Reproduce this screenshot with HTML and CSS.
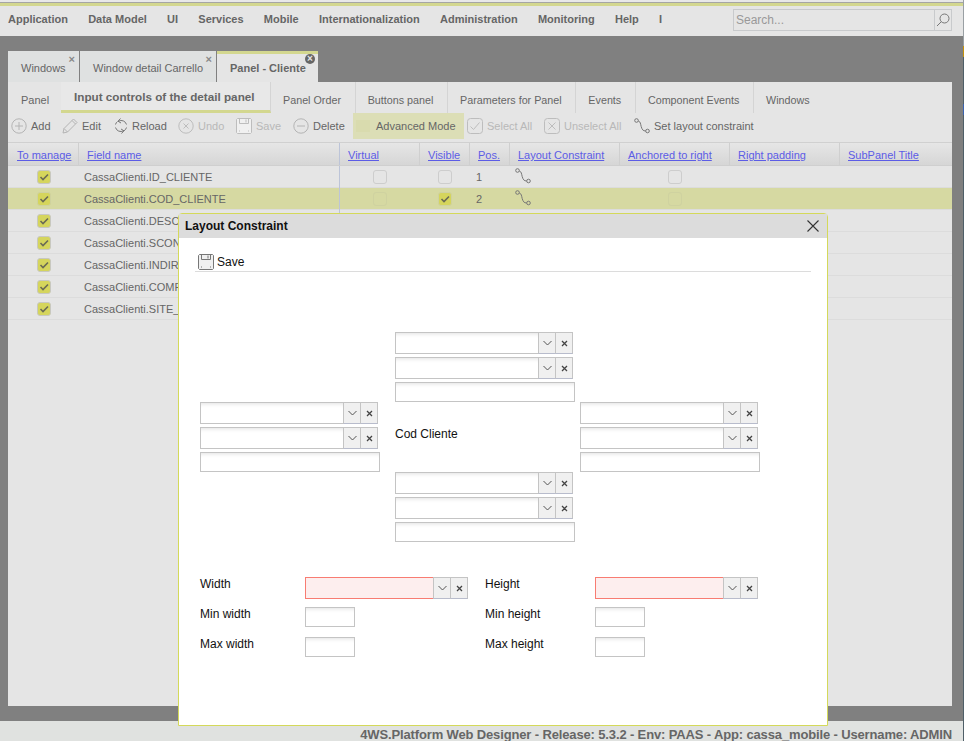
FILE: index.html
```html
<!DOCTYPE html>
<html>

<head>
  <meta charset="utf-8">
  <title>4WS.Platform Web Designer</title>
  <link rel="stylesheet" href="styles.css">
</head>

<body>
  <svg class="defs" width="0" height="0">
    <symbol id="i-plus" viewBox="0 0 16 16"><circle cx="8" cy="8" r="7.2" fill="none" stroke="currentColor"/><path d="M8 4v8M4 8h8" stroke="currentColor" fill="none"/></symbol>
    <symbol id="i-minus" viewBox="0 0 16 16"><circle cx="8" cy="8" r="7.2" fill="none" stroke="currentColor"/><path d="M4 8h8" stroke="currentColor" fill="none"/></symbol>
    <symbol id="i-cancel" viewBox="0 0 16 16"><circle cx="8" cy="8" r="7.2" fill="none" stroke="currentColor"/><path d="M5.5 5.5l5 5M10.5 5.5l-5 5" stroke="currentColor" fill="none"/></symbol>
    <symbol id="i-edit" viewBox="0 0 16 16"><path d="M1 15l1-4.5L11.5 1 15 4.5 5.5 14zM2 10.5L5.5 14M10 2.5L13.5 6" fill="none" stroke="currentColor"/></symbol>
    <symbol id="i-reload" viewBox="0 0 14 16"><path d="M4.5 3.2A5.5 5.5 0 0 1 12.5 6.5M12.5 9.5a5.5 5.5 0 0 1-2.5 3.3M9.5 12.8A5.5 5.5 0 0 1 1.5 9.5M1.5 6.5a5.5 5.5 0 0 1 2-3" fill="none" stroke="currentColor"/><path d="M6.5 0.5L4 3.2l3 1.8M7.5 15.5L10 12.8 7 11" fill="none" stroke="currentColor"/></symbol>
    <symbol id="i-save" viewBox="0 0 16 16"><path d="M1.5 0.5h13l1 1v13l-1 1h-13l-1-1v-13z" fill="#f0f0f0" stroke="currentColor"/><path d="M3.5 0.5v5h9v-5M10 1.5v3" fill="none" stroke="currentColor"/><path d="M3 13h1M12 13h1" stroke="currentColor"/></symbol>
    <symbol id="i-boxcheck" viewBox="0 0 16 16"><rect x="0.5" y="0.5" width="15" height="15" rx="3" fill="none" stroke="currentColor"/><path d="M3.5 8.5l3 3 6-7" fill="none" stroke="currentColor"/></symbol>
    <symbol id="i-boxcross" viewBox="0 0 16 16"><rect x="0.5" y="0.5" width="15" height="15" rx="3" fill="none" stroke="currentColor"/><path d="M4.5 4.5l7 7M11.5 4.5l-7 7" fill="none" stroke="currentColor"/></symbol>
    <symbol id="i-link" viewBox="0 0 16 16"><circle cx="2.5" cy="2.5" r="1.8" fill="none" stroke="currentColor"/><circle cx="13.5" cy="13" r="1.8" fill="none" stroke="currentColor"/><path d="M4.3 3C6.5 3.5 6.5 6 7.2 8.5 8 11.5 9 13 11.7 13" fill="none" stroke="currentColor"/></symbol>
    <symbol id="i-tick" viewBox="0 0 14 14"><path d="M3.5 7l2.5 2.5 5-5" fill="none" stroke="#6a6a55" stroke-width="1.6"/></symbol>
    <symbol id="i-down" viewBox="0 0 9 6"><path d="M0.5 1l4 4 4-4" fill="none" stroke="#555"/></symbol>
    <symbol id="i-clear" viewBox="0 0 7 7"><path d="M1 1l5 5M6 1l-5 5" fill="none" stroke="#444" stroke-width="1.3"/></symbol>
    <symbol id="i-search" viewBox="0 0 14 14"><circle cx="8.5" cy="5.5" r="4.5" fill="none" stroke="currentColor"/><path d="M5.3 8.7L1 13" stroke="currentColor" fill="none"/></symbol>
  </svg>

  <div class="app">
    <div class="topline"></div>

    <div class="menubar">
      <nav class="menu">
        <a>Application</a>
        <a>Data Model</a>
        <a>UI</a>
        <a>Services</a>
        <a>Mobile</a>
        <a>Internationalization</a>
        <a>Administration</a>
        <a>Monitoring</a>
        <a>Help</a>
        <a>I</a>
      </nav>
      <div class="search">
        <span class="search-text">Search...</span>
        <span class="search-btn"><svg width="14" height="14"><use href="#i-search"/></svg></span>
      </div>
    </div>

    <div class="workspace">
      <div class="tabs">
        <div class="tab tab-windows">Windows<span class="tab-x">×</span></div>
        <div class="tab tab-detail">Window detail Carrello<span class="tab-x">×</span></div>
        <div class="tab tab-current">Panel - Cliente<span class="tab-close">×</span></div>
      </div>

      <div class="panel">
        <div class="subtabs">
          <a class="subtab first">Panel</a>
          <a class="subtab active">Input controls of the detail panel</a>
          <a class="subtab">Panel Order</a>
          <a class="subtab">Buttons panel</a>
          <a class="subtab">Parameters for Panel</a>
          <a class="subtab">Events</a>
          <a class="subtab">Component Events</a>
          <a class="subtab last">Windows</a>
        </div>

        <div class="toolbar">
          <span class="tool off-icon t-add"><svg width="16" height="16"><use href="#i-plus"/></svg>Add</span>
          <span class="tool off-icon t-edit"><svg width="16" height="16"><use href="#i-edit"/></svg>Edit</span>
          <span class="tool t-reload"><svg width="14" height="16"><use href="#i-reload"/></svg>Reload</span>
          <span class="tool off t-undo"><svg width="16" height="16"><use href="#i-cancel"/></svg>Undo</span>
          <span class="tool off t-save"><svg width="16" height="16"><use href="#i-save"/></svg>Save</span>
          <span class="tool off-icon t-delete"><svg width="16" height="16"><use href="#i-minus"/></svg>Delete</span>
          <span class="tool advanced"><i class="advanced-slot"></i>Advanced Mode</span>
          <span class="tool off t-select"><svg width="16" height="16"><use href="#i-boxcheck"/></svg>Select All</span>
          <span class="tool off t-unselect"><svg width="16" height="16"><use href="#i-boxcross"/></svg>Unselect All</span>
          <span class="tool t-layout"><svg width="16" height="16"><use href="#i-link"/></svg>Set layout constraint</span>
        </div>

        <div class="grid">
          <div class="grid-row grid-head">
            <a>To manage</a>
            <a>Field name</a>
            <a>Virtual</a>
            <a>Visible</a>
            <a>Pos.</a>
            <a>Layout Constraint</a>
            <a>Anchored to right</a>
            <a>Right padding</a>
            <a>SubPanel Title</a>
          </div>

          <div class="grid-row">
            <span class="cell-check"><i class="check on"><svg width="14" height="14"><use href="#i-tick"/></svg></i></span>
            <span class="cell-name">CassaClienti.ID_CLIENTE</span>
            <span class="cell-check"><i class="check"></i></span>
            <span class="cell-check"><i class="check"></i></span>
            <span class="cell-pos">1</span>
            <span class="cell-icon"><svg width="16" height="16"><use href="#i-link"/></svg></span>
            <span class="cell-check"><i class="check"></i></span>
          </div>

          <div class="grid-row selected">
            <span class="cell-check"><i class="check on"><svg width="14" height="14"><use href="#i-tick"/></svg></i></span>
            <span class="cell-name">CassaClienti.COD_CLIENTE</span>
            <span class="cell-check"><i class="check"></i></span>
            <span class="cell-check"><i class="check on"><svg width="14" height="14"><use href="#i-tick"/></svg></i></span>
            <span class="cell-pos">2</span>
            <span class="cell-icon"><svg width="16" height="16"><use href="#i-link"/></svg></span>
            <span class="cell-check"><i class="check"></i></span>
          </div>

          <div class="grid-row">
            <span class="cell-check"><i class="check on"><svg width="14" height="14"><use href="#i-tick"/></svg></i></span>
            <span class="cell-name">CassaClienti.DESC</span>
          </div>
          <div class="grid-row">
            <span class="cell-check"><i class="check on"><svg width="14" height="14"><use href="#i-tick"/></svg></i></span>
            <span class="cell-name">CassaClienti.SCON</span>
          </div>
          <div class="grid-row">
            <span class="cell-check"><i class="check on"><svg width="14" height="14"><use href="#i-tick"/></svg></i></span>
            <span class="cell-name">CassaClienti.INDIR</span>
          </div>
          <div class="grid-row">
            <span class="cell-check"><i class="check on"><svg width="14" height="14"><use href="#i-tick"/></svg></i></span>
            <span class="cell-name">CassaClienti.COMP</span>
          </div>
          <div class="grid-row">
            <span class="cell-check"><i class="check on"><svg width="14" height="14"><use href="#i-tick"/></svg></i></span>
            <span class="cell-name">CassaClienti.SITE_</span>
          </div>
        </div>
      </div>
    </div>

    <div class="footer">4WS.Platform Web Designer - Release: 5.3.2 - Env: PAAS - App: cassa_mobile - Username: ADMIN</div>
  </div>

  <div class="edge"></div>

  <section class="modal">
    <header class="modal-head">
      <h2>Layout Constraint</h2>
      <svg class="modal-close" width="12" height="12" viewBox="0 0 12 12"><path d="M0.5 0.5l11 11M11.5 0.5l-11 11" fill="none" stroke="#333" stroke-width="1.1"/></svg>
    </header>

    <div class="modal-body">
      <div class="modal-toolbar">
        <svg width="16" height="16"><use href="#i-save"/></svg>
        <span>Save</span>
      </div>

      <div class="anchors">
        <div class="anchor anchor-top">
          <div class="combo"><span class="combo-input"></span><span class="combo-btn"><svg width="9" height="6"><use href="#i-down"/></svg></span><span class="combo-btn"><svg width="7" height="7"><use href="#i-clear"/></svg></span></div>
          <div class="combo"><span class="combo-input"></span><span class="combo-btn"><svg width="9" height="6"><use href="#i-down"/></svg></span><span class="combo-btn"><svg width="7" height="7"><use href="#i-clear"/></svg></span></div>
          <div class="text-input"></div>
        </div>

        <div class="anchor anchor-left">
          <div class="combo"><span class="combo-input"></span><span class="combo-btn"><svg width="9" height="6"><use href="#i-down"/></svg></span><span class="combo-btn"><svg width="7" height="7"><use href="#i-clear"/></svg></span></div>
          <div class="combo"><span class="combo-input"></span><span class="combo-btn"><svg width="9" height="6"><use href="#i-down"/></svg></span><span class="combo-btn"><svg width="7" height="7"><use href="#i-clear"/></svg></span></div>
          <div class="text-input"></div>
        </div>

        <div class="anchor-label">Cod Cliente</div>

        <div class="anchor anchor-right">
          <div class="combo"><span class="combo-input"></span><span class="combo-btn"><svg width="9" height="6"><use href="#i-down"/></svg></span><span class="combo-btn"><svg width="7" height="7"><use href="#i-clear"/></svg></span></div>
          <div class="combo"><span class="combo-input"></span><span class="combo-btn"><svg width="9" height="6"><use href="#i-down"/></svg></span><span class="combo-btn"><svg width="7" height="7"><use href="#i-clear"/></svg></span></div>
          <div class="text-input"></div>
        </div>

        <div class="anchor anchor-bottom">
          <div class="combo"><span class="combo-input"></span><span class="combo-btn"><svg width="9" height="6"><use href="#i-down"/></svg></span><span class="combo-btn"><svg width="7" height="7"><use href="#i-clear"/></svg></span></div>
          <div class="combo"><span class="combo-input"></span><span class="combo-btn"><svg width="9" height="6"><use href="#i-down"/></svg></span><span class="combo-btn"><svg width="7" height="7"><use href="#i-clear"/></svg></span></div>
          <div class="text-input"></div>
        </div>
      </div>

      <div class="sizes">
        <label>Width</label>
        <div class="combo combo-small"><span class="combo-input error"></span><span class="combo-btn"><svg width="9" height="6"><use href="#i-down"/></svg></span><span class="combo-btn"><svg width="7" height="7"><use href="#i-clear"/></svg></span></div>
        <label>Height</label>
        <div class="combo combo-small"><span class="combo-input error"></span><span class="combo-btn"><svg width="9" height="6"><use href="#i-down"/></svg></span><span class="combo-btn"><svg width="7" height="7"><use href="#i-clear"/></svg></span></div>

        <label>Min width</label>
        <div class="text-input short"></div>
        <label>Min height</label>
        <div class="text-input short"></div>

        <label>Max width</label>
        <div class="text-input short"></div>
        <label>Max height</label>
        <div class="text-input short"></div>
      </div>
    </div>
  </section>
</body>

</html>
```

FILE: styles.css
```css
* {
  box-sizing: border-box;
}

html,
body {
  height: 741px;
  margin: 0;
  overflow: hidden;
}

body {
  display: flex;
  position: relative;
  background: #808080;
  color: #666;
  font-family: "Liberation Sans", Arial, sans-serif;
  font-size: 11px;
}

.defs {
  position: absolute;
}

.app {
  display: flex;
  flex-direction: column;
  flex: 1;
  min-width: 0;
}

.edge {
  width: 1px;
  background: linear-gradient(#9aa0a4 0, #9aa0a4 46px, #c4920c 46px, #c4920c 57px, #4f5f68 57px, #4f5f68 104px, #3a62b0 104px, #3a62b0 115px, #4f5f68 115px);
}

/* top menu */
.topline {
  height: 6px;
  border-top: 2px solid #e8e8e8;
  background: #e5e5e5;
  box-shadow: inset 0 1px 0 #a5a5a5, inset 0 4px 0 #d3d78f;
}

.menubar {
  display: flex;
  justify-content: space-between;
  height: 30px;
  padding: 3px 11px 0 8px;
  background: #e5e5e5;
}

.menu {
  display: flex;
  gap: 20.25px;
  padding-top: 3px;
  font-weight: bold;
  line-height: 14px;
}

.search {
  display: flex;
  width: 219px;
  height: 22px;
  border: 1px solid #c8cacc;
}

.search-text {
  flex: 1;
  padding-left: 2px;
  color: #999;
  font-size: 12px;
  line-height: 20px;
}

.search-btn {
  display: flex;
  align-items: center;
  justify-content: center;
  width: 17px;
  border-left: 1px solid #c8cacc;
  color: #777;
}

/* work area */
.workspace {
  display: flex;
  flex-direction: column;
  flex: 1;
  min-height: 0;
  padding: 15px 11px 15px 8px;
}

.tabs {
  display: flex;
  gap: 1px;
  height: 31px;
}

.tab {
  position: relative;
  padding: 10px 13px 0;
  background: #dfe1e1;
  line-height: 14px;
  white-space: nowrap;
}

.tab-windows {
  width: 71px;
}

.tab-detail {
  width: 136px;
}

.tab-current {
  width: 101px;
  padding-top: 7px;
  border-top: 3px solid #d3d78f;
  background: #e5e5e5;
  font-weight: bold;
}

.tab-x {
  position: absolute;
  top: 2px;
  right: 4px;
  color: #888;
  font-size: 11px;
  font-weight: bold;
  line-height: 12px;
}

.tab-close {
  position: absolute;
  top: 0;
  right: 3px;
  width: 10px;
  height: 10px;
  border-radius: 50%;
  background: #666;
  color: #e5e5e5;
  font-size: 10px;
  line-height: 10px;
  text-align: center;
}

.panel {
  display: flex;
  flex-direction: column;
  flex: 1;
  min-height: 0;
  background: #e5e5e5;
}

.subtabs {
  display: flex;
  height: 31px;
}

.subtab {
  padding: 11px 13.7px 0 12px;
  border-right: 1px solid #d4d4d4;
  font-size: 10.75px;
  line-height: 14px;
  white-space: nowrap;
}

.subtab.first {
  width: 53px;
  padding-left: 13px;
  border-right: 0;
  font-size: 11px;
}

.subtab.last {
  border-right: 0;
}

.subtab.active {
  width: 210px;
  padding: 8px 0 0 13px;
  border-bottom: 3px solid #d3d78f;
  background: #e8e8e8;
  font-size: 11.7px;
  font-weight: bold;
}

.toolbar {
  display: flex;
  align-items: center;
  height: 29px;
  padding: 0 0 3px 3px;
}

.tool {
  display: flex;
  align-items: center;
  flex: none;
  gap: 4px;
  white-space: nowrap;
}

.tool svg {
  flex: none;
  color: #777;
}

.off-icon svg {
  color: #b4b4b4;
}

.off {
  color: #b8b8b8;
}

.off svg {
  color: #bdbdbd;
}

.t-add {
  width: 51px;
}

.t-edit {
  width: 52px;
}

.t-reload {
  width: 64px;
}

.t-undo {
  width: 58px;
}

.t-save {
  width: 57px;
}

.t-delete {
  width: 60px;
}

.advanced {
  gap: 6px;
  width: 111px;
  height: 26px;
  margin-right: 3px;
  padding-left: 3px;
  background: #dcdeb6;
}

.advanced-slot {
  width: 14px;
  height: 12px;
  background: #d9dbae;
}

.t-select {
  width: 77px;
}

.t-unselect {
  width: 90px;
}

/* fields grid */
.grid {
  border-top: 1px solid #d0d0d0;
}

.grid-row {
  display: grid;
  grid-template-columns: 71px 261px 80px 50px 40px 110px 110px 110px 1fr;
  height: 22px;
  align-items: center;
  border-bottom: 1px solid #dcdcdc;
}

.grid-row.selected {
  background: #d6d9a2;
}

.grid-head {
  height: 23px;
  background: linear-gradient(#e6e6e6, #d6d6d6);
  border-bottom: 1px solid #cfcfcf;
}

.grid-head a {
  height: 100%;
  padding: 5px 0 0 8px;
  border-right: 1px solid #cfcfcf;
  color: #5c5ce6;
  line-height: 14px;
  text-decoration: underline;
  white-space: nowrap;
}

.grid-head a:first-child {
  padding-left: 9px;
}

.grid-head a:nth-child(2) {
  border-right-color: #bcc4d8;
}

.grid-head a:last-child {
  border-right: 0;
}

.cell-check {
  display: flex;
  justify-content: center;
  margin-top: -1px;
}

.cell-name {
  height: 100%;
  padding-left: 5px;
  border-right: 1px solid #bcc4d8;
  line-height: 22px;
}

.cell-pos {
  padding-left: 6px;
}

.cell-icon {
  display: flex;
  margin-top: -2px;
  padding-left: 5px;
  color: #777;
}

.grid-row .cell-check:nth-child(7) {
  grid-column: 7;
}

.check {
  display: block;
  width: 14px;
  height: 14px;
  border: 1px solid #cdcdcd;
  border-radius: 3px;
}

.check svg {
  display: block;
  margin: -1px;
}

.check.on {
  border-color: #c8c8c0;
  background: #d5d55c;
}

.selected .check {
  border-color: #cfd2a0;
}

/* bottom bar */
.footer {
  height: 20px;
  padding: 6px 11px 0 0;
  background: #e0e2e0;
  font-size: 13px;
  font-weight: bold;
  letter-spacing: -.14px;
  line-height: 15px;
  text-align: right;
  white-space: nowrap;
}

/* dialog */
.modal {
  position: absolute;
  top: 213px;
  left: 178px;
  width: 650px;
  height: 513px;
  border: 1px solid #d4d95a;
  border-top-left-radius: 4px;
  border-top-right-radius: 4px;
  background: white;
  color: #111;
  font-size: 12px;
}

.modal-head {
  display: flex;
  align-items: center;
  justify-content: space-between;
  height: 24px;
  padding: 0 8px 0 6px;
  background: #dcdcdc;
}

.modal-head h2 {
  margin: 0;
  font-size: 12px;
}

.modal-body {
  padding: 0 16px 0 21px;
}

.modal-toolbar {
  display: flex;
  align-items: center;
  gap: 3px;
  width: 616px;
  height: 34px;
  margin-left: -5px;
  padding: 15px 0 0 3px;
  border-bottom: 1px solid #dcdcdc;
}

.modal-toolbar svg {
  color: #777;
}

.anchors {
  display: grid;
  grid-template-columns: 195px 185px 180px;
  grid-template-rows: 70px 70px 70px;
  margin-top: 60px;
}

.anchor {
  display: flex;
  flex-direction: column;
  gap: 3px;
}

.anchor-top,
.anchor-bottom,
.anchor-label {
  grid-column: 2;
}

.anchor-top {
  grid-row: 1;
}

.anchor-left {
  grid-column: 1;
  grid-row: 2;
}

.anchor-label {
  grid-row: 2;
  padding-top: 25px;
  line-height: 14px;
}

.anchor-right {
  grid-column: 3;
  grid-row: 2;
}

.anchor-bottom {
  grid-row: 3;
}

.combo {
  display: flex;
  width: 178px;
  height: 22px;
}

.combo-small {
  width: 163px;
}

.combo-input {
  flex: 1;
  border: 1px solid #c4c4c4;
  box-shadow: inset 0 5px 4px -4px rgba(0, 0, 0, .12);
}

.combo-input.error {
  border-color: #f87c72;
  background: #fdeeee;
  box-shadow: none;
}

.combo-btn {
  display: flex;
  align-items: center;
  justify-content: center;
  width: 18px;
  margin-left: -1px;
  border: 1px solid #c4c4c4;
  border-bottom-color: #b8bccc;
  background: #f0f0f0;
}

.text-input {
  width: 180px;
  height: 20px;
  border: 1px solid #c4c4c4;
  box-shadow: inset 0 5px 4px -4px rgba(0, 0, 0, .12);
}

.text-input.short {
  width: 50px;
}

.sizes {
  display: grid;
  grid-template-columns: 105px 180px 110px 170px;
  grid-template-rows: 30px 30px 30px;
  margin-top: 35px;
}

.sizes label {
  line-height: 14px;
}
```
